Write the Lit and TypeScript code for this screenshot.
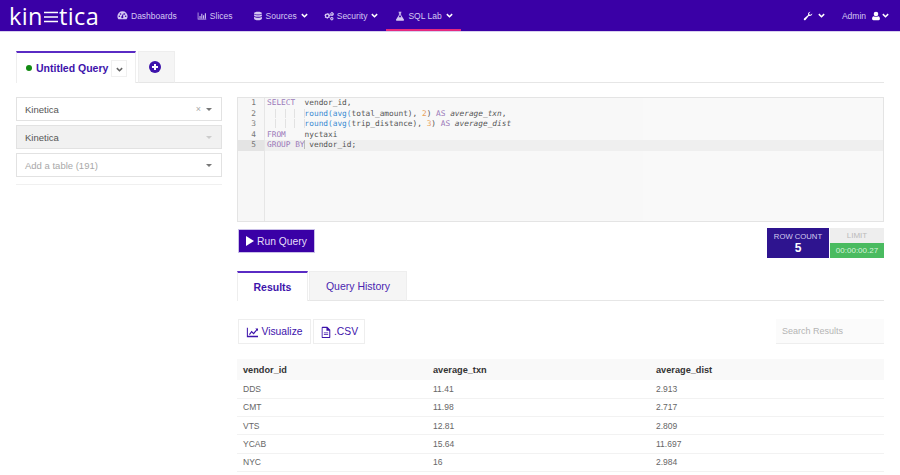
import { LitElement, html, css, svg } from 'lit';
import { customElement } from 'lit/decorators.js';

const chevron = html`<svg class="chev" viewBox="0 0 10 7"><path d="M1.2 1.5 5 5.2 8.8 1.5" fill="none" stroke="currentColor" stroke-width="2.2"/></svg>`;

const icons = {
  gauge: svg`<path d="M7 1.5a6.5 6.5 0 0 0-6.5 6.5c0 1.5.5 2.800 1.300 3.900h10.400A6.500 6.500 0 0 0 13.500 8 6.500 6.500 0 0 0 7 1.500zM3 9a1 1 0 1 1 0-2 1 1 0 0 1 0 2zm1.500-3a1 1 0 1 1 0-2 1 1 0 0 1 0 2zM7 10.500a1.500 1.500 0 0 1-.8-2.800L7.800 4.500l.7.300-.9 3a1.500 1.500 0 0 1-.6 2.700zM9.500 6a1 1 0 1 1 0-2 1 1 0 0 1 0 2zM11 9a1 1 0 1 1 0-2 1 1 0 0 1 0 2z"/>`,
  bars: svg`<path d="M1 2h1v9h11v1H1zM3.500 7h1.500v3.500H3.500zM6 4h1.500v6.500H6zM8.500 6H10v4.500H8.500zM11 3h1.500v7.500H11z"/>`,
  db: svg`<path d="M7 1c3 0 5.500.8 5.500 2S10 5 7 5 1.500 4.200 1.500 3 4 1 7 1zM1.500 4.500C2.500 5.600 5 6 7 6s4.500-.4 5.500-1.500V6.500C12.500 7.600 10 8 7 8s-5.500-.4-5.500-1.500zM1.500 8C2.500 9 5 9.400 7 9.400S11.500 9 12.500 8v2.500C12.500 12 10 13 7 13s-5.500-1-5.500-2.500z"/>`,
  cogs: svg`<path fill-rule="evenodd" d="M5 3.500l1 .3.700-.7 1.100.7-.3.900.6.800 1 .1v1.300l-1 .2-.4.900.5.900-1 .9-.9-.5-.9.4-.2 1H3.900l-.2-1-.9-.4-.9.5-.9-.9.500-.9-.4-.9-1-.2V6.500l1-.1.400-.9-.5-.9.900-.9.900.5.900-.4.200-1h1.100zM4.500 5.300a1.600 1.600 0 1 0 0 3.200 1.600 1.600 0 0 0 0-3.200zM11 1l.5.700.8-.1.300.8.800.3-.1.800.7.500-.5.700.2.800-.8.300-.3.800-.8-.1-.6.600-.6-.6-.8.100-.3-.8-.8-.3.200-.8-.5-.7.700-.5-.1-.8.800-.3.300-.8.800.1zM11 3a.9.900 0 1 0 0 1.800A.9.900 0 0 0 11 3zM11 8l.4.600.7-.1.300.7.700.3-.1.700.5.500-.5.500.1.700-.7.300-.3.700-.7-.1-.4.600-.5-.6-.7.100-.3-.7-.7-.3.100-.7-.5-.5.500-.5-.1-.7.700-.3.300-.7.700.1zm0 1.900a.8.800 0 1 0 0 1.600.8.800 0 0 0 0-1.600z"/>`,
  flask: svg`<path d="M5 1h4v1H8.500v3.500l4 6.500c.4.700 0 1.500-.8 1.500H2.300c-.8 0-1.200-.8-.8-1.500l4-6.500V2H5zm1.700 1v3.900L5 8.600h4L7.300 5.900V2z"/>`,
  wrench: svg`<path d="M13 3.500a3.500 3.500 0 0 1-4.700 3.300L3.500 12.500a1.400 1.400 0 0 1-2-2L7.200 5.700A3.500 3.500 0 0 1 10.500 1l-2 2 .4 2 2 .4 2-2c.1.300.1.500.1.700z"/>`,
  user: svg`<path d="M7 1a3 3 0 1 1 0 6.500A3 3 0 0 1 7 1zM4 7.200c.8.600 1.800 1 3 1s2.200-.4 3-1c1.700.2 2.500 1.600 2.500 3.800 0 1.200-.7 2-1.800 2H3.300c-1.100 0-1.800-.8-1.800-2 0-2.200.8-3.600 2.500-3.800z"/>`,
  chart: svg`<path d="M1 2h1.200v9.500H14V13H1zM3.500 9.500 6.500 5.500l2.300 2.300L12 4l-1.200-1H14v3.200L13 5 8.900 10 6.600 7.700 4.500 10.500z"/>`,
  file: svg`<path fill-rule="evenodd" d="M3 1h5.500L12 4.500V13a1 1 0 0 1-1 1H3a1 1 0 0 1-1-1V2a1 1 0 0 1 1-1zm0 1.200v10.600h7.800V5.500H7.500V2.200zM4.500 7.500h5v1h-5zm0 2h5v1h-5z"/>`,
};

const icon = (name: keyof typeof icons) =>
  html`<svg class="ico ${name}" viewBox="0 0 14 14" fill="currentColor">${icons[name]}</svg>`;

// the four indent guides of a continued line
const indent = html`<span class="ind">  </span><span class="ind">  </span><span class="ind">  </span><span class="ind">  </span>`;

const rows = [
  ['DDS', '11.41', '2.913'],
  ['CMT', '11.98', '2.717'],
  ['VTS', '12.81', '2.809'],
  ['YCAB', '15.64', '11.697'],
  ['NYC', '16', '2.984'],
];

@customElement('app-root')
export class AppRoot extends LitElement {
  static styles = css`
    :host {
      display: block;
      height: 475px;
      overflow: hidden;
      background: #fff;
      font-family: "Liberation Sans", Arial, sans-serif;
      color: #4a4a4a;
    }
    .nav {
      display: flex;
      align-items: stretch;
      height: 31px;
      background: #3a00a6;
      border-bottom: 1px solid #d8d0ee;
      color: #d5c8f2;
      font-size: 8.5px;
    }
    .logo {
      display: flex;
      align-items: center;
      width: 117px;
      padding-left: 9px;
      box-sizing: border-box;
      color: #fff;
      font-size: 23.5px;
      font-weight: 400;
      font-family: "Open Sans", sans-serif;
      letter-spacing: 0.4px;
    }
    .logo svg { width: 14px; height: 14px; margin: 2px 1px 0 1px; flex: none; }
    .menu { display: flex; flex: 1; }
    .item {
      display: flex;
      align-items: center;
      gap: 3px;
      margin-right: 20px;
      white-space: nowrap;
    }
    .item.dd { margin-right: 16px; }
    .item.sec { margin-right: 8px; }
    .item.active {
      box-shadow: inset 0 -2px 0 #e6297f;
      padding: 0 8px 0 9px;
      margin-right: 0;
    }
    .ico { width: 10px; height: 10px; flex: none; }
    .item .gauge { width: 11px; height: 11px; }
    .chev { width: 7px; height: 5px; flex: none; color: #fff; margin-left: 1px; }
    .right { display: flex; align-items: center; padding-right: 11px; }
    .right .ico { color: #fff; }
    .right .wrench { margin-right: 4px; }
    .right .admin { margin: 0 5px 0 17px; }

    .page { padding: 19px 16px 0; }
    .tabs {
      display: flex;
      gap: 2px;
      height: 32px;
      box-shadow: inset 0 -1px 0 #e6e6e6;
    }
    .tab {
      display: flex;
      align-items: center;
      justify-content: center;
      box-sizing: border-box;
      background: #f5f5f5;
      border: 1px solid #eee;
      border-bottom: 1px solid #e6e6e6;
      color: #3d13ab;
    }
    .tab.on {
      background: #fff;
      border: 0;
      border-top: 2px solid #5a2bc4;
      border-left: 1px solid #eee;
      border-right: 1px solid #eee;
      font-weight: 700;
    }
    .qtab {
      width: 120px;
      font-size: 10.5px;
      gap: 4px;
      justify-content: flex-start;
      padding-left: 9px;
    }
    .dot { width: 6px; height: 6px; border-radius: 50%; background: #128a12; flex: none; }
    .qchev {
      width: 16px;
      height: 17px;
      margin-left: -1px;
      display: flex;
      align-items: center;
      justify-content: center;
      border: 1px solid #f0f0f0;
      box-sizing: border-box;
    }
    .qchev .chev { color: #666; margin: 2px 0 0; width: 7px; height: 5px; }
    .add { width: 37px; padding-right: 4px; }
    .add svg { width: 12px; height: 12px; }

    .body {
      display: grid;
      grid-template-columns: 206px 647px;
      column-gap: 15px;
      margin-top: 14px;
    }
    .side { display: flex; flex-direction: column; gap: 4px; }
    .sel {
      display: flex;
      align-items: center;
      height: 24px;
      box-sizing: border-box;
      padding: 0 9px 0 8px;
      border: 1px solid #e2e2e2;
      font-size: 9.5px;
      color: #555;
      background: #fff;
    }
    .sel.off { background: #f1f1f1; }
    .sel .ph { color: #a8a8a8; }
    .sel .txt { flex: 1; }
    .sel .x { color: #aaa; font-size: 9px; margin-right: 5px; }
    .caret {
      width: 0;
      height: 0;
      border: 3.5px solid transparent;
      border-top-color: #777;
      border-bottom: 0;
    }
    .off .caret { border-top-color: #ccc; }
    .side hr {
      border: 0;
      border-top: 1px solid #f0f0f0;
      margin: 3px 0 0;
    }

    .editor {
      display: flex;
      height: 125px;
      box-sizing: border-box;
      border: 1px solid #e4e4e4;
      background: #f9f9f9;
      font-family: "DejaVu Sans Mono", monospace;
      font-size: 7.8px;
      line-height: 10.5px;
      color: #555;
    }
    .gutter {
      width: 27px;
      flex: none;
      box-sizing: border-box;
      border-right: 1px solid #e6e6e6;
      padding-right: 8px;
      text-align: right;
      color: #777;
      background: #f7f7f7;
    }
    .gutter div.cur { background: #e4e4e4; margin-right: -8px; padding-right: 8px; }
    .code {
      flex: 1;
      white-space: pre;
      background: linear-gradient(to right, #f8f8f8 378px, #f9f9f9 378px);
    }
    .code div { padding-left: 2px; }
    .code .cur { background: #efefef; }
    .ind { box-shadow: inset -1px 0 #e2e2e2; }
    .caretline { box-shadow: inset -1px 0 #bbb; }
    .k { color: #9a78b8; }
    .f { color: #3a8ad2; }
    .n { color: #e8a05a; }
    .i { font-style: italic; }

    .actions {
      display: flex;
      justify-content: space-between;
      margin-top: 6px;
      height: 31px;
    }
    .run {
      display: flex;
      align-items: center;
      gap: 3px;
      width: 77px;
      height: 24px;
      margin: 1px 0 0 1px;
      box-sizing: border-box;
      justify-content: center;
      background: #3a00a6;
      border: 1px solid #c9bfe8;
      color: #e6def8;
      font-size: 10.3px;
    }
    .run i {
      width: 0;
      height: 0;
      border-left: 8px solid #fff;
      border-top: 5px solid transparent;
      border-bottom: 5px solid transparent;
    }
    .stats { display: flex; gap: 1px; }
    .count {
      width: 62px;
      height: 30px;
      background: #2e148f;
      color: #d4cdf0;
      font-size: 7.7px;
      text-align: center;
      padding-top: 4px;
      box-sizing: border-box;
      line-height: 9px;
    }
    .count b { display: block; font-size: 12px; line-height: 14px; color: #fff; }
    .lim { width: 54px; text-align: center; font-size: 8px; }
    .lim .l { height: 15px; line-height: 15px; background: #eee; color: #bbb; }
    .lim .t { height: 15px; line-height: 15px; background: #4abb60; color: #d8f3dc; }

    .rtabs { height: 30px; margin-top: 12px; gap: 1px; }
    .rt1 { width: 71px; font-size: 10.5px; color: #3d13ab; }
    .rt2 { width: 98px; font-size: 10.5px; color: #4a25b0; }

    .tools {
      display: flex;
      align-items: center;
      gap: 2px;
      margin: 18px 0 0 1px;
      height: 25px;
    }
    .btn {
      display: flex;
      align-items: center;
      justify-content: center;
      gap: 3px;
      height: 25px;
      box-sizing: border-box;
      border: 1px solid #eee;
      color: #3d13ab;
      font-size: 10.3px;
    }
    .btn .ico { width: 12px; height: 12px; }
    .btn.viz { width: 73px; }
    .btn.csv { width: 52px; gap: 2px; }
    .search {
      margin-left: auto;
      width: 108px;
      height: 25px;
      line-height: 24px;
      box-sizing: border-box;
      padding-left: 6px;
      background: #fbfbfb;
      border-bottom: 1px solid #eee;
      color: #b4b4b4;
      font-size: 9px;
    }

    table {
      width: 647px;
      margin-top: 15px;
      border-collapse: collapse;
      table-layout: fixed;
      font-size: 8.5px;
      color: #666;
    }
    .c1 { width: 190px; }
    .c2 { width: 223px; }
    th {
      height: 21px;
      padding: 0 6px;
      text-align: left;
      background: #f9f9f9;
      font-size: 9.2px;
      font-weight: 700;
      color: #333;
    }
    td {
      height: 18.3px;
      box-sizing: border-box;
      padding: 0 6px;
      border-bottom: 1px solid #f2f2f2;
    }
  `;

  render() {
    return html`
      <div class="nav">
        <div class="logo">kin<svg viewBox="0 0 14 14"><path d="M0 2.500h14M0 7h14M0 11.500h14" stroke="#fff" stroke-width="1.600"/></svg>tica</div>
        <div class="menu">
          <div class="item">${icon('gauge')}Dashboards</div>
          <div class="item">${icon('bars')}Slices</div>
          <div class="item dd">${icon('db')}Sources ${chevron}</div>
          <div class="item sec">${icon('cogs')}Security ${chevron}</div>
          <div class="item active">${icon('flask')}SQL Lab ${chevron}</div>
        </div>
        <div class="right">
          ${icon('wrench')} ${chevron}
          <span class="admin">Admin</span> ${icon('user')} ${chevron}
        </div>
      </div>
      <div class="page">
        <div class="tabs">
          <div class="tab on qtab">
            <span class="dot"></span>Untitled Query
            <span class="qchev">${chevron}</span>
          </div>
          <div class="tab add">
            <svg viewBox="0 0 12 12"><circle cx="6" cy="6" r="6" fill="#3d13ab"/><path d="M6 3v6M3 6h6" stroke="#fff" stroke-width="2"/></svg>
          </div>
        </div>
        <div class="body">
          <div class="side">
            <div class="sel"><span class="txt">Kinetica</span><span class="x">×</span><span class="caret"></span></div>
            <div class="sel off"><span class="txt">Kinetica</span><span class="caret"></span></div>
            <div class="sel"><span class="txt ph">Add a table (191)</span><span class="caret"></span></div>
            <hr />
          </div>
          <div class="main">
            <div class="editor">
              <div class="gutter">
                <div>1</div><div>2</div><div>3</div><div>4</div><div class="cur">5</div>
              </div>
              <div class="code"><div><span class="k">SELECT</span>  vendor_id,</div><div>${indent}<span class="f">round(avg(</span>total_amount), <span class="n">2</span>) <span class="k">AS</span> <span class="i">average_txn</span>,</div><div>${indent}<span class="f">round(avg(</span>trip_distance), <span class="n">3</span>) <span class="k">AS</span> <span class="i">average_dist</span></div><div><span class="k">FROM</span>    nyctaxi</div><div class="cur"><span class="k caretline">GROUP BY</span> vendor_id;</div></div>
            </div>
            <div class="actions">
              <div class="run"><i></i>Run Query</div>
              <div class="stats">
                <div class="count">ROW COUNT<b>5</b></div>
                <div class="lim"><div class="l">LIMIT</div><div class="t">00:00:00.27</div></div>
              </div>
            </div>
            <div class="tabs rtabs">
              <div class="tab on rt1">Results</div>
              <div class="tab rt2">Query History</div>
            </div>
            <div class="tools">
              <div class="btn viz">${icon('chart')}Visualize</div>
              <div class="btn csv">${icon('file')}.CSV</div>
              <div class="search">Search Results</div>
            </div>
            <table>
              <colgroup><col class="c1" /><col class="c2" /><col /></colgroup>
              <thead><tr><th>vendor_id</th><th>average_txn</th><th>average_dist</th></tr></thead>
              <tbody>
                ${rows.map((r) => html`<tr>${r.map((c) => html`<td>${c}</td>`)}</tr>`)}
              </tbody>
            </table>
          </div>
        </div>
      </div>
    `;
  }
}
